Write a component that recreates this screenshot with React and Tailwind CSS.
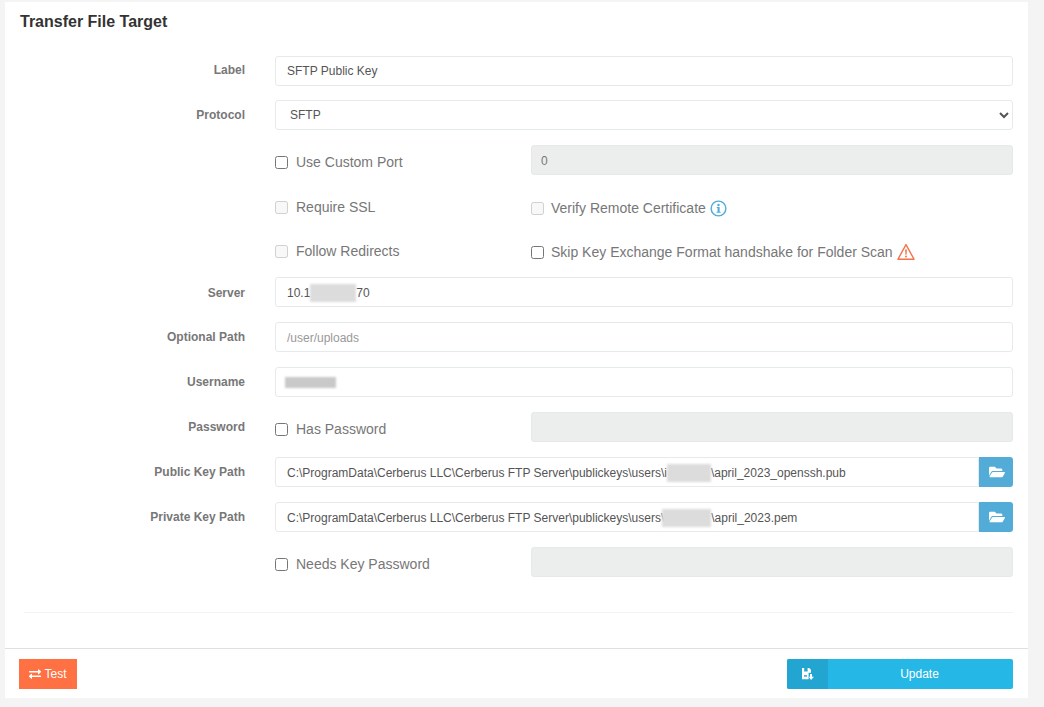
import { FaFolderOpen, FaExchangeAlt } from "react-icons/fa"

const inputBox = "h-[30px] w-full rounded-[3px] border border-[#e5eaec] bg-white px-[11px] text-[12px] text-[#555] outline-none"
const lowerBox = `${inputBox} pt-[2px]`
const disabledBox = "h-[30px] w-full rounded-[3px] border border-[#e6e9ea] bg-[#eceded] px-[9px] pt-[2px] text-[12px] text-[#777] outline-none"

function Blur({ className }) {
  return <span className={`inline-block h-[18px] bg-[#dcdcdc] align-middle blur-[1px] ${className}`}></span>
}

// ROW WITH RIGHT ALIGNED LABEL
function Row({ label, className = "", labelClass = "", children }) {
  return (
    <div className={`flex h-[30px] items-center ${className}`}>
      <div className={`mr-[30px] w-[226px] shrink-0 text-right text-[12px] font-bold text-[#777] ${labelClass}`}>{label}</div>
      <div className="flex min-w-0 flex-1 items-center">{children}</div>
    </div>
  )
}

function Check({ label, disabled, right, children }) {
  return (
    <label className={`flex items-center text-[14px] text-[#777] ${right ? "mt-[6px]" : "mt-[5px]"}`}>
      <input type="checkbox" disabled={disabled} className={`m-0 h-[13px] w-[13px] ${right ? "mr-[7px]" : "mr-[8px]"}`} />
      <span>{label}</span>
      {children}
    </label>
  )
}

function InfoIcon() {
  return (
    <svg viewBox="0 0 18 18" className="ml-[4px] h-[17px] w-[17px]">
      <circle cx="9" cy="9" r="7.8" fill="none" stroke="#4fadd9" strokeWidth="1.5" />
      <path d="M7.2 7.4h3v5h1.1v1.2H6.9v-1.2h1.1V8.6h-.8z" fill="#4fadd9" />
      <circle cx="9" cy="5.2" r="1.3" fill="#4fadd9" />
    </svg>
  )
}

function WarnIcon() {
  return (
    <svg viewBox="0 0 18 18" className="ml-[4px] h-[18px] w-[18px]">
      <path d="M9 1.6 17 16.2H1z" fill="none" stroke="#f4734a" strokeWidth="1.4" strokeLinejoin="round" />
      <path d="M8.1 6.4h1.8l-.3 5.4H8.4z" fill="#f4734a" />
      <circle cx="9" cy="13.6" r="1" fill="#f4734a" />
    </svg>
  )
}

function SaveIcon() {
  return (
    <svg viewBox="0 0 12 12" className="h-[12px] w-[12px]" fill="#fff">
      <path d="M0 0h2.2v3.4h3.4V0h1.5L9 1.8v3H6.6v6.4H0z" />
      <rect x="2" y="7.2" width="3" height="1.4" fill="#22a5d1" />
      <path d="M8 6h2v2.8h2L9 12 6.8 8.8H8z" />
    </svg>
  )
}

function Browse() {
  return (
    <button className="flex h-[30px] w-[34px] shrink-0 items-center justify-center rounded-r-[3px] bg-[#53acd8] text-white">
      <FaFolderOpen className="ml-px h-[16px] w-[16px]" />
    </button>
  )
}

export default function App() {
  return (
    <div className="h-[707px] overflow-hidden bg-[#f4f4f4] pt-[2px] pl-[5px] pr-[16px] font-['Liberation_Sans',Arial,sans-serif]">
      <div className="h-[696px] bg-white">
        <h1 className="pt-[11px] pl-[15px] text-[16px] leading-[17px] font-bold text-[#333]">Transfer File Target</h1>

        <div className="mt-[26px] flex flex-col gap-[15px] pr-[15px] pl-[14px]">
          <Row label="Label" labelClass="-translate-y-px">
            <input className={`${inputBox} pb-[1px]`} defaultValue="SFTP Public Key" />
          </Row>
          <Row label="Protocol" className="-mt-px">
            <select className={`${inputBox} !px-[10px]`} defaultValue="SFTP">
              <option>SFTP</option>
            </select>
          </Row>
          <Row>
            <div className="w-[256px] shrink-0"><Check label="Use Custom Port" /></div>
            <input disabled className={disabledBox} defaultValue="0" />
          </Row>
          <Row>
            <div className="w-[256px] shrink-0"><Check label="Require SSL" disabled /></div>
            <Check right label="Verify Remote Certificate" disabled><InfoIcon /></Check>
          </Row>
          <Row className="-mt-px">
            <div className="w-[256px] shrink-0"><Check label="Follow Redirects" disabled /></div>
            <Check right label="Skip Key Exchange Format handshake for Folder Scan"><WarnIcon /></Check>
          </Row>
          <Row label="Server" className="-mt-[2px]" labelClass="translate-y-px">
            <div className={`${lowerBox} flex items-center`}>
              10.1<Blur className="w-[46px]" />70
            </div>
          </Row>
          <Row label="Optional Path">
            <input className={`${lowerBox} placeholder:text-[#999]`} placeholder="/user/uploads" />
          </Row>
          <Row label="Username">
            <div className={`${inputBox} flex items-center pl-[9px]`}>
              <Blur className="w-[51px] !h-[11px] !bg-[#c9c9c9]" />
            </div>
          </Row>
          <Row label="Password">
            <div className="w-[256px] shrink-0"><Check label="Has Password" /></div>
            <input disabled className={disabledBox} />
          </Row>
          <Row label="Public Key Path">
            <div className={`${lowerBox} flex items-center rounded-r-none whitespace-nowrap`}>
              C:\ProgramData\Cerberus LLC\Cerberus FTP Server\publickeys\users\i<Blur className="w-[44px]" />\april_2023_openssh.pub
            </div>
            <Browse />
          </Row>
          <Row label="Private Key Path">
            <div className={`${lowerBox} flex items-center rounded-r-none whitespace-nowrap`}>
              C:\ProgramData\Cerberus LLC\Cerberus FTP Server\publickeys\users\<Blur className="-ml-[2px] w-[49px]" />\april_2023.pem
            </div>
            <Browse />
          </Row>
          <Row>
            <div className="w-[256px] shrink-0"><Check label="Needs Key Password" /></div>
            <input disabled className={disabledBox} />
          </Row>
        </div>

        <div className="mt-[35px] mr-[15px] ml-[19px] border-t border-[#f3f4f4]"></div>

        <div className="mt-[35px] flex items-center justify-between border-t border-[#e0e0e0] pt-[10px] pr-[15px] pl-[14px]">
          <button className="flex h-[30px] w-[58px] items-center justify-center gap-[3px] bg-[#ff7043] text-[12px] text-white">
            <FaExchangeAlt className="h-[12px] w-[12px]" /> Test
          </button>
          <button className="flex h-[30px] w-[226px] overflow-hidden rounded-[2px] bg-[#25b7e6] text-[12px] text-white">
            <span className="flex h-full w-[41px] items-center justify-center bg-[#22a5d1]"><SaveIcon /></span>
            <span className="flex h-full flex-1 items-center justify-center pr-[2px]">Update</span>
          </button>
        </div>
      </div>
    </div>
  )
}
